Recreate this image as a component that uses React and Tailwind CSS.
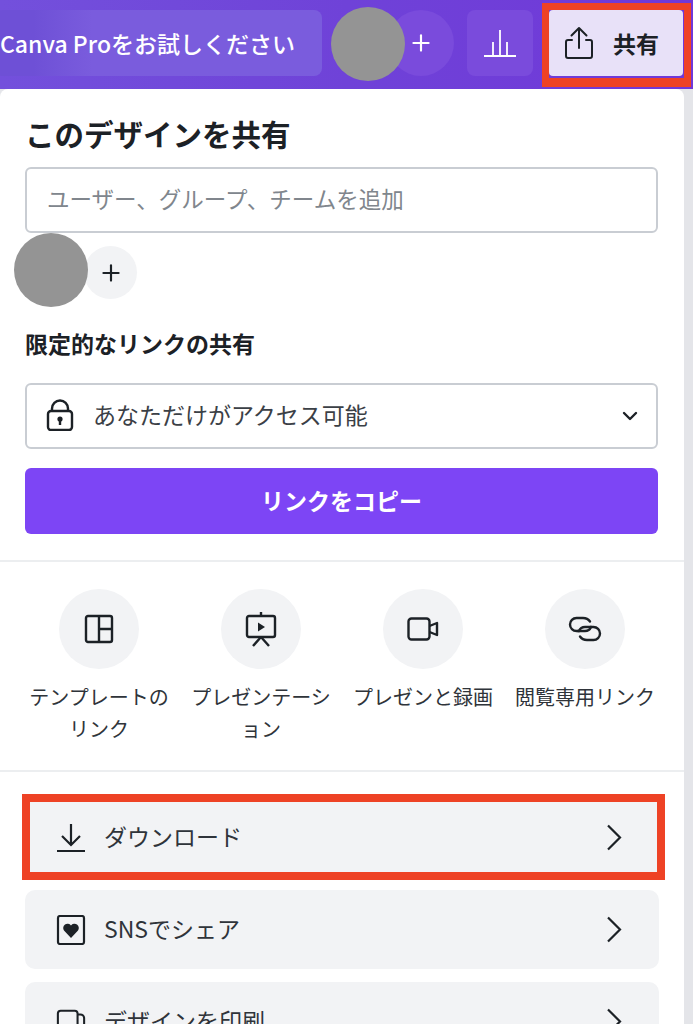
import React from 'react';
import { Plus, ChevronDown } from 'lucide-react';

const jp = "font-['Noto_Sans_CJK_JP','Noto_Sans',sans-serif]";

const Tile = ({ label, children }) => (
  <div className="flex w-[162px] shrink-0 flex-col items-center">
    <div className="flex h-[80px] w-[80px] items-center justify-center rounded-full bg-[#f2f3f5] text-[#1c2126]">
      {children}
    </div>
    <p className="mt-[12px] w-[146px] text-center text-[20px] leading-[32px] text-[#2f343a] [line-break:loose]">{label}</p>
  </div>
);

const Row = ({ icon, label }) => (
  <div className="flex h-[79px] shrink-0 items-center rounded-[10px] bg-[#f2f3f5] pl-[31px] pr-[37px]">
    <span className="flex w-[30px] shrink-0 justify-center text-[#1c2126]">{icon}</span>
    <span className="mb-[2px] ml-[18px] flex-1 text-[23px] text-[#2f343a]">{label}</span>
    <svg width="16" height="27" viewBox="0 0 16 27" fill="none" stroke="#1c2126" strokeWidth="2.2">
      <path d="M2 1.500 14 13.500 2 25.500" />
    </svg>
  </div>
);

export default function App() {
  return (
    <div className={`relative h-[1024px] w-[693px] overflow-hidden bg-[#e4e5e9] ${jp}`}>
      {/* Top bar */}
      <header className="flex h-[89px] items-center bg-gradient-to-r from-[#7350dc] via-[#6f42d8] to-[#7038d8] pb-[3px]">
        <div className="ml-[-6px] flex h-[66px] w-[328px] items-center rounded-[8px] bg-gradient-to-r from-[#6e50d6] from-[12%] to-[#7a5cdd] to-[30%] pl-[6px]">
          <span className="whitespace-nowrap text-[23px] font-medium text-white">Canva Proをお試しください</span>
        </div>
        <div className="ml-[66px] flex h-[66px] w-[66px] items-center justify-center rounded-full bg-[#7a4bdc] text-white">
          <Plus className="h-[26px] w-[26px]" strokeWidth={2} />
        </div>
        <div className="ml-[13px] flex h-[66px] w-[66px] items-center justify-center rounded-[8px] bg-[#7a4bdc] text-white">
          <svg width="34" height="30" viewBox="0 0 34 30" fill="none" stroke="currentColor" strokeWidth="1.8">
            <path d="M1 28h32M10 27V14M17 27V2M24 27V14" />
          </svg>
        </div>
        <div className="ml-[16px] flex h-[66px] w-[134px] items-center rounded-[4px] bg-[#e8e1f8] pl-[14px] text-[#1c2126]">
          <svg width="32" height="34" viewBox="0 0 32 34" fill="none" stroke="currentColor" strokeWidth="2" strokeLinecap="round" strokeLinejoin="round">
            <path d="M16 22V2M8.500 9.500 16 2l7.500 7.500M9 14H5a2 2 0 0 0-2 2v14a2 2 0 0 0 2 2h22a2 2 0 0 0 2-2V16a2 2 0 0 0-2-2h-4" />
          </svg>
          <span className="ml-[18px] text-[23px] font-bold">共有</span>
        </div>
      </header>

      {/* Share panel */}
      <main className="h-[935px] w-[684px] rounded-t-[8px] bg-white">
        <div className="px-[25px]">
          <h1 className="pt-[24px] text-[29.500px] leading-[41px] font-bold text-[#1c2126]">このデザインを共有</h1>
          <div className="mt-[13px] flex h-[66px] w-[633px] items-center rounded-[6px] border-2 border-[#c9cdd3] pb-[2px] pl-[20px] text-[22.500px] text-[#80868d]">
            ユーザー、グループ、チームを追加
          </div>
          <div className="mt-[13px] ml-[59px] flex h-[53px] w-[53px] items-center justify-center rounded-full bg-[#f2f3f5] text-[#1c2126]">
            <Plus className="h-[26px] w-[26px]" strokeWidth={2} />
          </div>
          <h2 className="mt-[29px] mb-[25px] text-[23px] leading-[30px] font-bold text-[#1c2126]">限定的なリンクの共有</h2>
          <div className="flex h-[66px] w-[633px] items-center rounded-[6px] border-2 border-[#c9cdd3] pl-[19px] pr-[14px]">
            <svg className="mb-[2px]" width="28" height="32" viewBox="0 0 28 32" fill="none" stroke="#1c2126" strokeWidth="2.400">
              <rect x="2" y="12" width="24" height="19" rx="3" />
              <path d="M6 12V9.500a8 8 0 0 1 16 0V12" />
              <circle cx="14" cy="20" r="2.600" fill="#1c2126" stroke="none" />
              <path d="M14 21v5" />
            </svg>
            <span className="mb-[3px] ml-[19px] flex-1 text-[23px] text-[#3b4046]">あなただけがアクセス可能</span>
            <ChevronDown className="h-[24px] w-[24px] text-[#1c2126]" strokeWidth={2.400} />
          </div>
          <button className="mt-[19px] flex h-[66px] w-[633px] items-center justify-center rounded-[6px] bg-[#7d45f5] pb-[2px] text-[23px] font-bold text-white">
            リンクをコピー
          </button>
        </div>

        <div className="mt-[26px] border-t-2 border-[#eceef0]" />

        <div className="flex pt-[27px] pl-[18px]">
          <Tile label="テンプレートのリンク">
            <svg width="30" height="30" viewBox="0 0 30 30" fill="none" stroke="currentColor" strokeWidth="2.400">
              <rect x="2" y="2" width="26" height="26" rx="2" />
              <path d="M15 2v26M15 15h13" />
            </svg>
          </Tile>
          <Tile label="プレゼンテーション">
            <svg width="34" height="36" viewBox="0 0 34 36" fill="none" stroke="currentColor" strokeWidth="2.400">
              <path d="M17 1v5" />
              <rect x="3" y="5" width="28" height="21" rx="2" />
              <path d="M14 11.500v9l7-4.500z" fill="currentColor" stroke="none" />
              <path d="M17 26 9 35M17 26l8 9" />
            </svg>
          </Tile>
          <Tile label="プレゼンと録画">
            <svg width="32" height="24" viewBox="0 0 32 24" fill="none" stroke="currentColor" strokeWidth="2.400" strokeLinejoin="round">
              <rect x="1.500" y="1.500" width="21" height="21" rx="3" />
              <path d="M22.500 9 30 6v12l-7.500-3" />
            </svg>
          </Tile>
          <Tile label="閲覧専用リンク">
            <svg width="34" height="26" viewBox="0 0 34 26" fill="none" stroke="currentColor" strokeWidth="2.400" strokeLinecap="round">
              <path d="M22 5.500C20.500 3.300 18 2 15 2H8.500a6.500 6.500 0 0 0 0 13H11" />
              <path d="M12 20.500C13.500 22.700 16 24 19 24h6.500a6.500 6.500 0 0 0 0-13H23" />
              <path d="M10 15h7c3 0 5-1.500 6-4" />
              <path d="M11 15c1-2.500 3-4 6-4h6" />
            </svg>
          </Tile>
        </div>

        <div className="mt-[25px] border-t-2 border-[#eceef0]" />

        <div className="flex flex-col gap-[13px] px-[25px] pt-[26px]">
          <Row
            label="ダウンロード"
            icon={
              <svg width="30" height="30" viewBox="0 0 30 30" fill="none" stroke="currentColor" strokeWidth="2.200">
                <path d="M15 1v20M6 13l9 9 9-9M1 28h28" />
              </svg>
            }
          />
          <Row
            label="SNSでシェア"
            icon={
              <svg width="30" height="30" viewBox="0 0 30 30" fill="none">
                <rect x="2" y="1" width="26" height="28" rx="2" stroke="currentColor" strokeWidth="2.200" />
                <path d="M15 23 8 15.500a4.300 4.300 0 0 1 7-5 4.300 4.300 0 0 1 7 5z" fill="currentColor" />
              </svg>
            }
          />
          <Row
            label="デザインを印刷"
            icon={
              <svg width="32" height="30" viewBox="0 0 32 30" fill="none" stroke="currentColor" strokeWidth="2.200">
                <path d="M2 29V6a3 3 0 0 1 3-3h15a3 3 0 0 1 3 3v23M23 7h3a4 4 0 0 1 4 4v18" />
              </svg>
            }
          />
        </div>
      </main>

      {/* Annotations drawn over the screenshot */}
      <div className="absolute top-[7px] left-[331px] h-[74px] w-[74px] rounded-full bg-[#949494]" />
      <div className="absolute top-[233px] left-[14px] h-[74px] w-[74px] rounded-full bg-[#949494]" />
      <div className="absolute top-[3px] left-[542px] h-[84px] w-[149px] border-[7px] border-b-[9px] border-[#ee4225]" />
      <div className="absolute top-[794px] left-[22px] h-[86px] w-[643px] border-[8px] border-[#ee4225]" />
    </div>
  );
}
